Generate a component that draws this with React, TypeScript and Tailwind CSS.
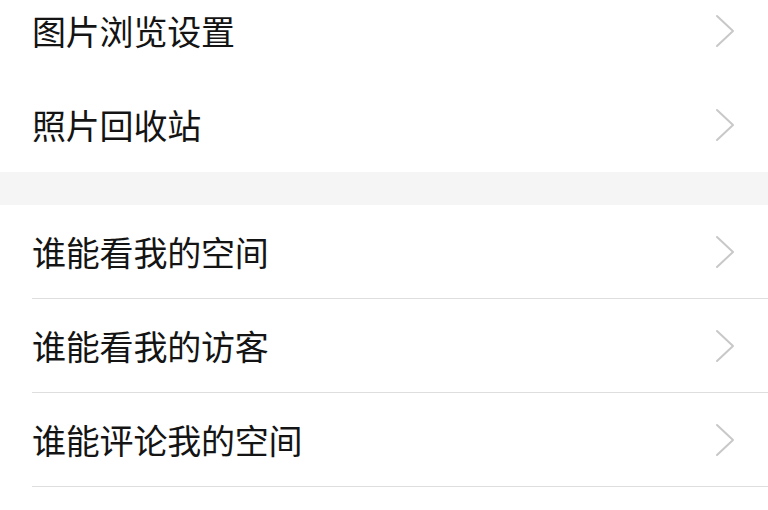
import React from "react";

const Chevron = () => (
  <svg width="20" height="34" viewBox="0 0 20 34" fill="none" className="shrink-0">
    <polyline points="2,2 18,17 2,32" stroke="#c8c8c8" strokeWidth="2" strokeLinecap="round" strokeLinejoin="round" />
  </svg>
);

const Row = ({ label, border }: { label: string; border?: boolean }) => (
  <div className="pl-[32px] bg-white">
    <div
      className={
        "flex items-center justify-between pr-[33px] " +
        (border ? "h-[94px] border-b border-[#dedede]" : "h-[94px]")
      }
    >
      <span className="text-[34px] leading-none text-[#141414] tracking-[-0.2px]">{label}</span>
      <Chevron />
    </div>
  </div>
);

export default function App() {
  return (
    <div
      className="w-[768px] h-[510px] overflow-hidden bg-white"
      style={{ fontFamily: '"Noto Sans CJK SC", "Noto Sans", sans-serif' }}
    >
      <div className="-mt-[16px] flex flex-col">
        <Row label="图片浏览设置" />
        <Row label="照片回收站" />
        <div className="h-[33px] bg-[#f5f5f5]" />
        <Row label="谁能看我的空间" border />
        <Row label="谁能看我的访客" border />
        <Row label="谁能评论我的空间" border />
        <Row label="谁能转发我的说说" border />
      </div>
    </div>
  );
}
